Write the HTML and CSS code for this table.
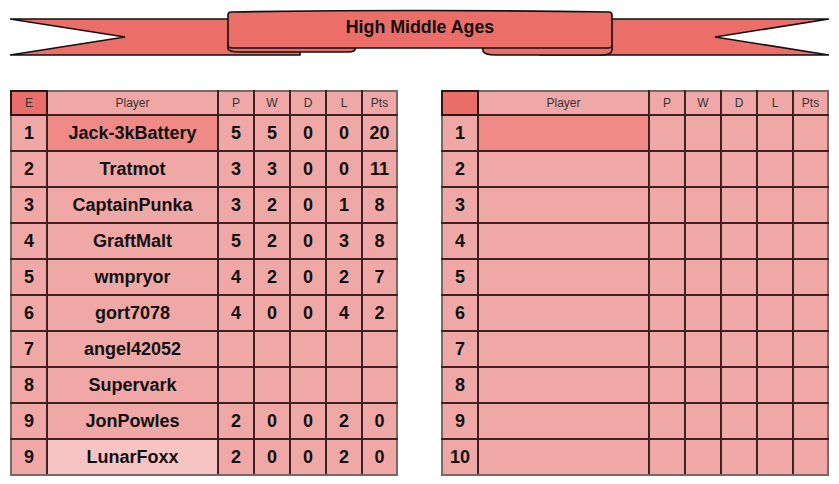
FILE: index.html
```html
<!DOCTYPE html>
<html>
<head>
<meta charset="utf-8">
<link rel="stylesheet" href="styles.css">
</head>
<body>
<div class="page">
  <header class="banner">
    <svg class="banner-art" width="839" height="60" viewBox="0 0 839 60">
      <g fill="#eb6e69" stroke="#111" stroke-width="1.6" stroke-linejoin="miter">
        <path d="M10,19 L300,19 L300,55 L10,55 L125,37 Z"/>
        <path d="M829,19 L540,19 L540,55 L829,55 L715,37 Z"/>
        <path d="M228,44 L228,49 Q229,52 240,52 L348,52 Q356,52 355,48 L355,44 Z"/>
        <path d="M483,46 L483,51 Q484,55 496,55 L600,55 Q612,55 612,50 L612,46 Z"/>
        <path d="M231,12 Q420,9 609,12 Q612,12 612,15 L612,45 Q612,48 608,48 L232,48 Q228,48 228,45 L228,15 Q228,12 231,12 Z"/>
      </g>
    </svg>
    <span class="banner-title">High Middle Ages</span>
  </header>

  <main class="tables">
    <table class="standings">
      <colgroup>
        <col class="c-rank"><col class="c-player"><col class="c-num"><col class="c-num"><col class="c-num"><col class="c-num"><col class="c-pts">
      </colgroup>
      <thead>
        <tr><th class="corner">E</th><th>Player</th><th>P</th><th>W</th><th>D</th><th>L</th><th>Pts</th></tr>
      </thead>
      <tbody>
        <tr><td>1</td><td class="leader">Jack-3kBattery</td><td>5</td><td>5</td><td>0</td><td>0</td><td>20</td></tr>
        <tr><td>2</td><td>Tratmot</td><td>3</td><td>3</td><td>0</td><td>0</td><td>11</td></tr>
        <tr><td>3</td><td>CaptainPunka</td><td>3</td><td>2</td><td>0</td><td>1</td><td>8</td></tr>
        <tr><td>4</td><td>GraftMalt</td><td>5</td><td>2</td><td>0</td><td>3</td><td>8</td></tr>
        <tr><td>5</td><td>wmpryor</td><td>4</td><td>2</td><td>0</td><td>2</td><td>7</td></tr>
        <tr><td>6</td><td>gort7078</td><td>4</td><td>0</td><td>0</td><td>4</td><td>2</td></tr>
        <tr><td>7</td><td>angel42052</td><td></td><td></td><td></td><td></td><td></td></tr>
        <tr><td>8</td><td>Supervark</td><td></td><td></td><td></td><td></td><td></td></tr>
        <tr><td>9</td><td>JonPowles</td><td>2</td><td>0</td><td>0</td><td>2</td><td>0</td></tr>
        <tr><td>9</td><td class="faded">LunarFoxx</td><td>2</td><td>0</td><td>0</td><td>2</td><td>0</td></tr>
      </tbody>
    </table>

    <table class="standings">
      <colgroup>
        <col class="c-rank"><col class="c-player"><col class="c-num"><col class="c-num"><col class="c-num"><col class="c-num"><col class="c-pts">
      </colgroup>
      <thead>
        <tr><th class="corner"></th><th>Player</th><th>P</th><th>W</th><th>D</th><th>L</th><th>Pts</th></tr>
      </thead>
      <tbody>
        <tr><td>1</td><td class="leader"></td><td></td><td></td><td></td><td></td><td></td></tr>
        <tr><td>2</td><td></td><td></td><td></td><td></td><td></td><td></td></tr>
        <tr><td>3</td><td></td><td></td><td></td><td></td><td></td><td></td></tr>
        <tr><td>4</td><td></td><td></td><td></td><td></td><td></td><td></td></tr>
        <tr><td>5</td><td></td><td></td><td></td><td></td><td></td><td></td></tr>
        <tr><td>6</td><td></td><td></td><td></td><td></td><td></td><td></td></tr>
        <tr><td>7</td><td></td><td></td><td></td><td></td><td></td><td></td></tr>
        <tr><td>8</td><td></td><td></td><td></td><td></td><td></td><td></td></tr>
        <tr><td>9</td><td></td><td></td><td></td><td></td><td></td><td></td></tr>
        <tr><td>10</td><td></td><td></td><td></td><td></td><td></td><td></td></tr>
      </tbody>
    </table>
  </main>
</div>
</body>
</html>
```

FILE: styles.css
```css
* { box-sizing: border-box; }

html, body {
  margin: 0;
  padding: 0;
  background: #ffffff;
  font-family: "Liberation Sans", Arial, sans-serif;
  color: #111;
}

.page {
  width: 839px;
  height: 484px;
  overflow: hidden;
}

.banner {
  position: relative;
  height: 60px;
}

.banner-art {
  display: block;
}

.banner-title {
  position: absolute;
  left: 228px;
  width: 384px;
  top: 17px;
  text-align: center;
  font-size: 17.8px;
  font-weight: bold;
  color: #111;
  line-height: 20px;
}

.tables {
  display: flex;
  gap: 43px;
  padding: 30px 0 0 10px;
}

.standings {
  border-collapse: collapse;
  table-layout: fixed;
  width: 386px;
  border: 1px solid #7a6868;
  flex: none;
}

.c-rank { width: 36px; }
.c-player { width: 171px; }
.c-num { width: 36px; }
.c-pts { width: 35px; }

.standings th,
.standings td {
  background: #f0a8a7;
  border: 2px solid #3e2222;
  text-align: center;
  padding: 0;
  overflow: hidden;
  white-space: nowrap;
}

.standings th {
  height: 24px;
  font-size: 12px;
  font-weight: normal;
  color: #333;
  border-top-color: #7a6868;
}

.standings td {
  height: 36px;
  font-size: 18px;
  font-weight: bold;
  color: #111;
}

.standings tr > :first-child { border-left-color: #7a6868; }
.standings tr > :last-child { border-right-color: #7a6868; }
.standings tbody tr:last-child td { border-bottom-color: #7a6868; }

.standings th.corner {
  background: #e96e6a;
  border: 2px solid #2a1414;
}

.standings td.leader { background: #ef8a87; }
.standings td.faded { background: #f7c4c3; }
```
